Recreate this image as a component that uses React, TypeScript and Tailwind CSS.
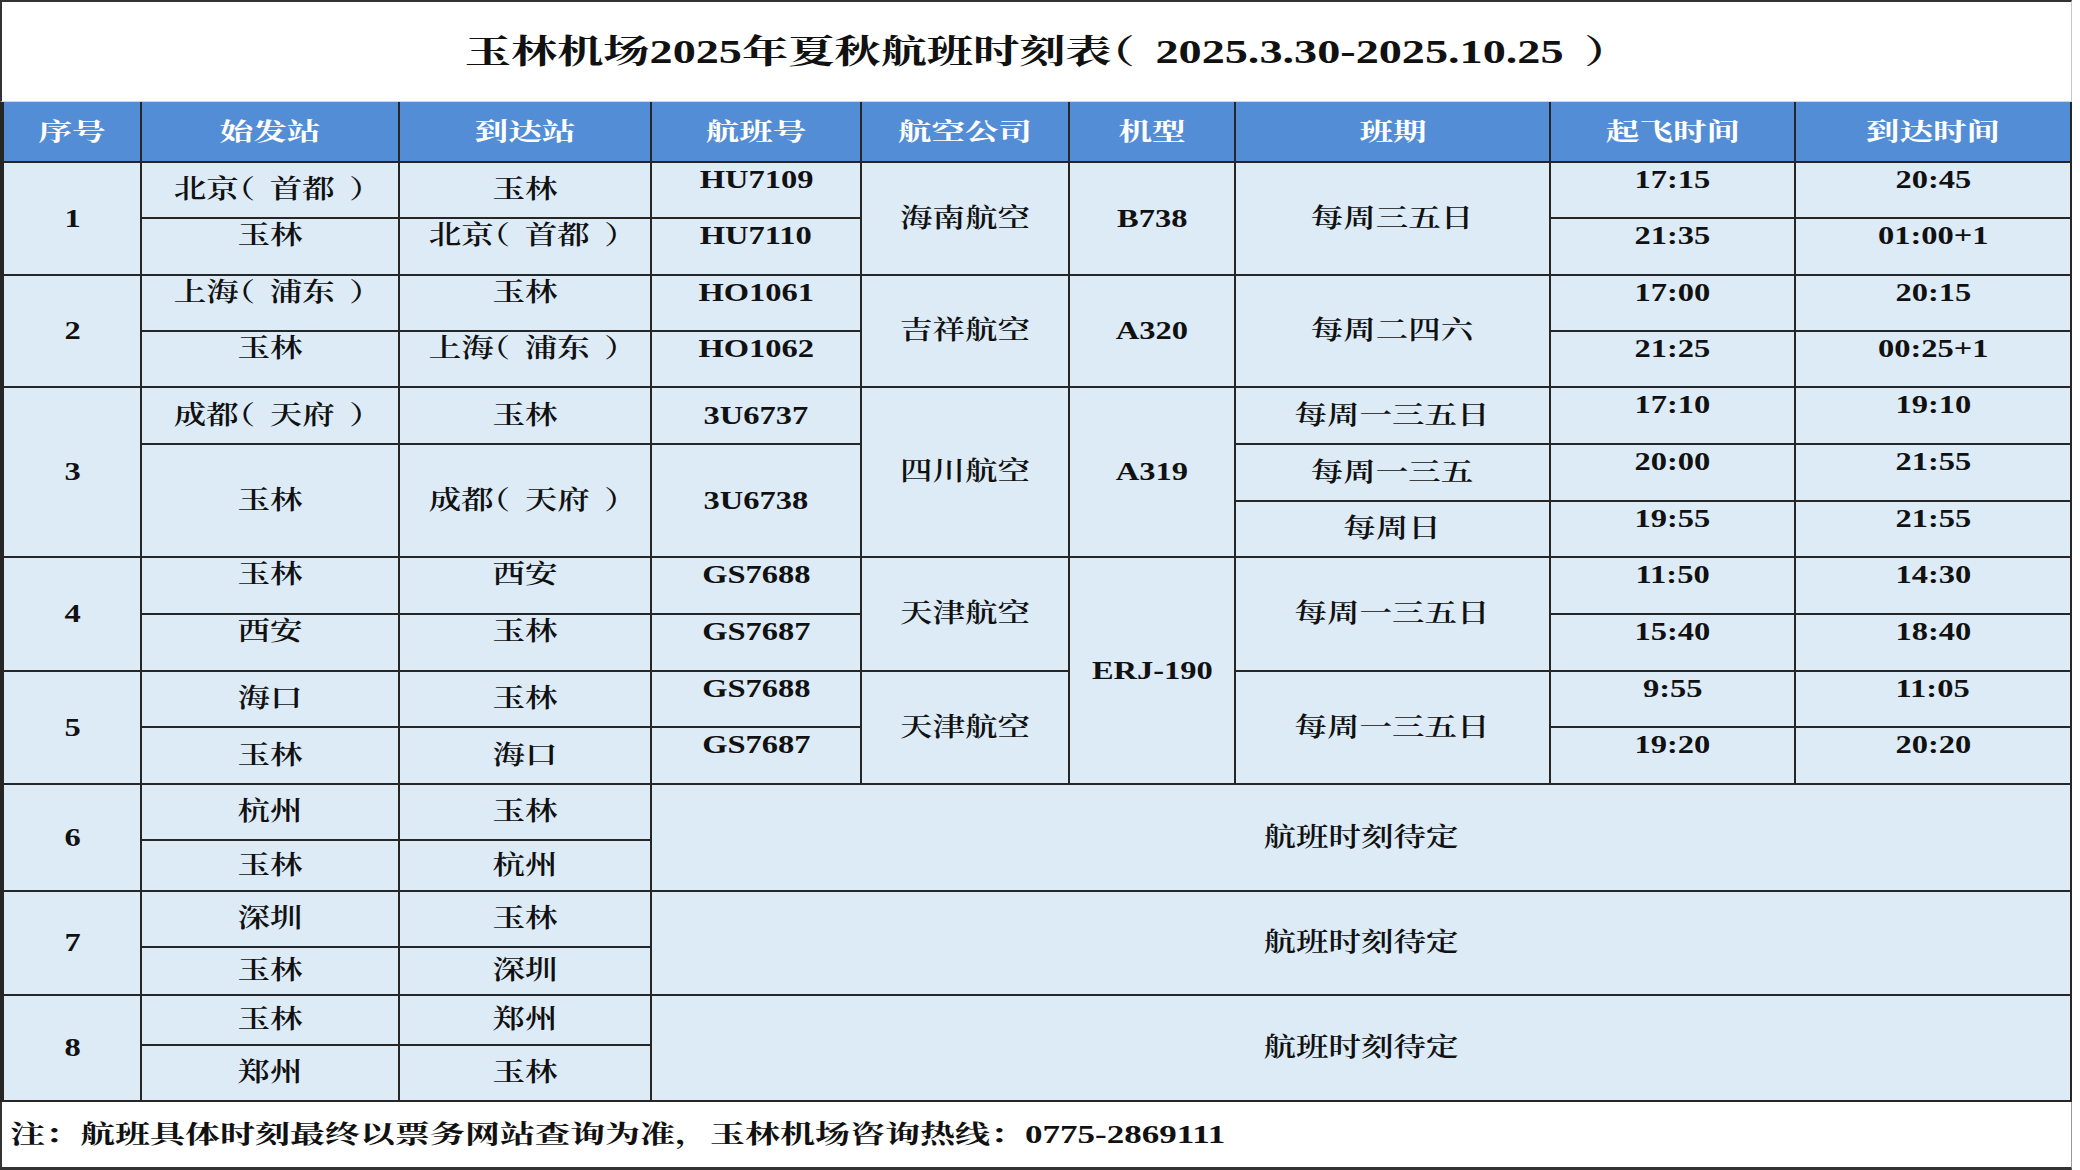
import React from "react";

type CellProps = { children: React.ReactNode; c?: string; top?: boolean };

function fmt(s: React.ReactNode): React.ReactNode {
  if (typeof s !== "string") return s;
  const parts = s.split(/([（）])/);
  return parts.map((p, i) => {
    if (p === "（")
      return (
        <span key={i} className="[font-feature-settings:'halt'] mr-[0.45em]">
          （
        </span>
      );
    if (p === "）")
      return (
        <span key={i} className="[font-feature-settings:'halt'] ml-[0.45em]">
          ）
        </span>
      );
    return <React.Fragment key={i}>{p}</React.Fragment>;
  });
}

function H({ children }: { children: React.ReactNode }) {
  return (
    <div className="bg-[#538DD5] flex items-center justify-center text-white font-bold text-[24px] leading-[28px]">
      <span className="inline-block scale-x-140 whitespace-nowrap">{children}</span>
    </div>
  );
}

function B({ children, c = "", top = false }: CellProps) {
  return (
    <div
      className={`bg-[#DDEBF7] flex justify-center text-[#111] font-semibold text-[26px] leading-[30px] ${
        top ? "items-start pt-[2px]" : "items-center"
      } ${c}`}
    >
      <span className="inline-block scale-x-125 whitespace-nowrap">{fmt(children)}</span>
    </div>
  );
}

export default function App() {
  return (
    <div className="w-[2080px] h-[1170px] bg-white overflow-hidden font-['Liberation_Serif','Noto_Serif_CJK_SC','Noto_Sans_CJK_SC',serif]">
      <div className="h-[102px] w-[2072px] border-t-2 border-l-2 border-t-[#333] border-l-[#333] border-r border-r-[#c8c8c8] border-b border-b-[#c8d8ec] flex items-center justify-center">
        <span className="inline-block scale-x-140 whitespace-nowrap text-[33px] font-bold text-[#111] leading-[40px]">
          {fmt("玉林机场2025年夏秋航班时刻表（2025.3.30-2025.10.25）")}
        </span>
      </div>

      <div className="grid w-[2072px] grid-cols-[136px_256px_250px_208px_206px_164px_313px_243px_274px] grid-rows-[59px_54px_55px_54px_54px_55px_55px_54px_55px_55px_54px_55px_54px_49px_54px_46px_48px_54px] gap-[2px] bg-[#262626] border-l-4 border-r-2 border-b-2 border-[#262626]">
        <H>序号</H>
        <H>始发站</H>
        <H>到达站</H>
        <H>航班号</H>
        <H>航空公司</H>
        <H>机型</H>
        <H>班期</H>
        <H>起飞时间</H>
        <H>到达时间</H>

        {/* 1 */}
        <B c="row-span-2">1</B>
        <B>北京（首都）</B>
        <B>玉林</B>
        <B top>HU7109</B>
        <B c="row-span-2">海南航空</B>
        <B c="row-span-2">B738</B>
        <B c="row-span-2">每周三五日</B>
        <B top>17:15</B>
        <B top>20:45</B>
        <B top>玉林</B>
        <B top>北京（首都）</B>
        <B top>HU7110</B>
        <B top>21:35</B>
        <B top>01:00+1</B>

        {/* 2 */}
        <B c="row-span-2">2</B>
        <B top>上海（浦东）</B>
        <B top>玉林</B>
        <B top>HO1061</B>
        <B c="row-span-2">吉祥航空</B>
        <B c="row-span-2">A320</B>
        <B c="row-span-2">每周二四六</B>
        <B top>17:00</B>
        <B top>20:15</B>
        <B top>玉林</B>
        <B top>上海（浦东）</B>
        <B top>HO1062</B>
        <B top>21:25</B>
        <B top>00:25+1</B>

        {/* 3 */}
        <B c="row-span-3">3</B>
        <B>成都（天府）</B>
        <B>玉林</B>
        <B>3U6737</B>
        <B c="row-span-3">四川航空</B>
        <B c="row-span-3">A319</B>
        <B>每周一三五日</B>
        <B top>17:10</B>
        <B top>19:10</B>
        <B c="row-span-2">玉林</B>
        <B c="row-span-2">成都（天府）</B>
        <B c="row-span-2">3U6738</B>
        <B>每周一三五</B>
        <B top>20:00</B>
        <B top>21:55</B>
        <B>每周日</B>
        <B top>19:55</B>
        <B top>21:55</B>

        {/* 4 */}
        <B c="row-span-2">4</B>
        <B top>玉林</B>
        <B top>西安</B>
        <B top>GS7688</B>
        <B c="row-span-2">天津航空</B>
        <B c="row-span-4">ERJ-190</B>
        <B c="row-span-2">每周一三五日</B>
        <B top>11:50</B>
        <B top>14:30</B>
        <B top>西安</B>
        <B top>玉林</B>
        <B top>GS7687</B>
        <B top>15:40</B>
        <B top>18:40</B>

        {/* 5 */}
        <B c="row-span-2">5</B>
        <B>海口</B>
        <B>玉林</B>
        <B top>GS7688</B>
        <B c="row-span-2">天津航空</B>
        <B c="row-span-2">每周一三五日</B>
        <B top>9:55</B>
        <B top>11:05</B>
        <B>玉林</B>
        <B>海口</B>
        <B top>GS7687</B>
        <B top>19:20</B>
        <B top>20:20</B>

        {/* 6 */}
        <B c="row-span-2">6</B>
        <B>杭州</B>
        <B>玉林</B>
        <B c="row-span-2 col-span-6">航班时刻待定</B>
        <B>玉林</B>
        <B>杭州</B>

        {/* 7 */}
        <B c="row-span-2">7</B>
        <B>深圳</B>
        <B>玉林</B>
        <B c="row-span-2 col-span-6">航班时刻待定</B>
        <B>玉林</B>
        <B>深圳</B>

        {/* 8 */}
        <B c="row-span-2">8</B>
        <B>玉林</B>
        <B>郑州</B>
        <B c="row-span-2 col-span-6">航班时刻待定</B>
        <B>郑州</B>
        <B>玉林</B>
      </div>

      <div className="h-[68px] w-[2072px] border-l-2 border-l-[#333] border-r border-r-[#9a9a9a] border-b-[3px] border-b-[#333] flex items-center pl-[8px]">
        <span className="inline-block origin-left scale-x-140 whitespace-nowrap text-[25px] font-bold text-[#111] leading-[30px]">
          注：航班具体时刻最终以票务网站查询为准，玉林机场咨询热线：0775-2869111
        </span>
      </div>
    </div>
  );
}
